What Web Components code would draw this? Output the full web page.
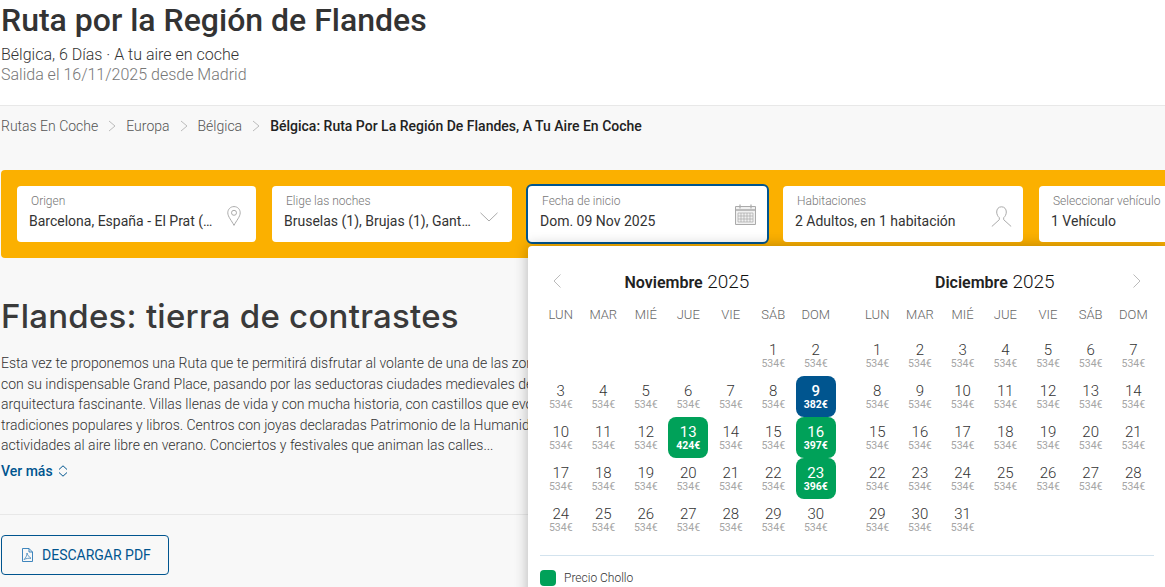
<!DOCTYPE html>
<html lang="es">
<head>
<meta charset="utf-8">
<title>Ruta por la Región de Flandes</title>
<style>
html, body { margin: 0; height: 587px; overflow: hidden; }
body { background: #f8f8f8; font-family: Roboto, "Liberation Sans", sans-serif; color: #333; }
</style>
</head>
<body>
<trip-page></trip-page>
<script>
const html = (strings, ...parts) => {
	const tpl = document.createElement('template')
	tpl.innerHTML = parts.reduce((s, value, i) => `${s}${strings[i]}${value}`, '') + strings[parts.length]
	return tpl
}

class Base extends HTMLElement {
	constructor(tpl) {
		super()
		this.attachShadow({mode: 'open'})
		this.shadowRoot.append(tpl.content.cloneNode(true))
	}
}

const headerTpl = html`<style>
:host { display: block; background: #fff; height: 106px; padding-left: 1px; box-sizing: border-box; border-bottom: 1px solid #e8e8e8; }
h1 { margin: 0; font: 500 32px/40px Roboto, sans-serif; color: #333; }
p { margin: 0; font: 300 16px/20px Roboto, sans-serif; }
.sub { margin-top: 5px; color: #333; }
.dep { color: #777; }
</style>
<h1>Ruta por la Región de Flandes</h1>
<p class="sub">Bélgica, 6 Días · A tu aire en coche</p>
<p class="dep">Salida el 16/11/2025 desde Madrid</p>`
customElements.define('trip-header', class extends Base {
	constructor() { super(headerTpl) }
})

const crumbsTpl = html`<style>
:host { display: flex; align-items: center; box-sizing: border-box; height: 41px; padding: 0 0 2px 1px; font: 300 14px Roboto, sans-serif; color: #555; white-space: nowrap; }
svg { width: 8px; height: 12px; margin: 0 10px 0 10px; fill: none; stroke: #bbb; }
b { font-weight: 500; color: #222; }
</style>
<span>Rutas En Coche</span>
<svg viewBox="0 0 8 12"><path d="M1 1l6 5-6 5"/></svg>
<span>Europa</span>
<svg viewBox="0 0 8 12"><path d="M1 1l6 5-6 5"/></svg>
<span>Bélgica</span>
<svg viewBox="0 0 8 12"><path d="M1 1l6 5-6 5"/></svg>
<b>Bélgica: Ruta Por La Región De Flandes, A Tu Aire En Coche</b>`
customElements.define('bread-crumbs', class extends Base {
	constructor() { super(crumbsTpl) }
})

const fieldTpl = html`<style>
:host { display: block; position: relative; flex: none; width: 240px; height: 56px; box-sizing: border-box; background: #fff; border-radius: 4px; padding: 7px 12px 0 12px; }
:host([active]) { height: 60px; width: 243px; margin: -2px -2px; border: 2px solid #00558f; border-radius: 6px; }
.label { font: 300 12px/16px Roboto, sans-serif; color: #777; padding-left: 2px; }
.value { margin-top: 2px; font: 400 14px/20px Roboto, sans-serif; color: #333; width: var(--value-width, 186px); white-space: nowrap; overflow: hidden; text-overflow: ellipsis; }
::slotted(svg) { position: absolute; right: 12px; top: 18px; }
</style>
<div class="label"></div>
<div class="value"></div>
<slot></slot>`
customElements.define('search-field', class extends Base {
	constructor() { super(fieldTpl) }
	connectedCallback() {
		this.shadowRoot.querySelector('.label').textContent = this.getAttribute('label')
		this.shadowRoot.querySelector('.value').textContent = this.getAttribute('value')
	}
})

const barTpl = html`<style>
:host { display: flex; gap: 16px; align-items: center; margin-left: 1px; margin-top: 23px; padding: 16px; height: 56px; width: 1300px; background: #fbb000; border-radius: 4px 0 0 4px; }
</style><slot></slot>`
customElements.define('search-bar', class extends Base {
	constructor() { super(barTpl) }
})

const introTpl = html`<style>
:host { display: block; padding-left: 1px; width: 700px; }
h2 { margin: 36px 0 0; font: 500 33px/44px Inter, sans-serif; color: #3a3a3a; white-space: nowrap; letter-spacing: .24px; }
p { margin: 15px 0 0; font: 300 14px/20.500px Roboto, sans-serif; color: #333; white-space: nowrap; }
.more { display: flex; align-items: center; gap: 5px; margin-top: 5px; font: 500 14px/21px Roboto, sans-serif; color: #00558f; }
hr { margin: 32px 0 0 -1px; width: 1165px; border: 0; border-top: 1px solid #e8e8e8; }
</style>
<h2>Flandes: tierra de contrastes</h2>
<p>Esta vez te proponemos una Ruta que te permitirá disfrutar al volante de una de las zon<br>
con su indispensable Grand Place, pasando por las seductoras ciudades medievales de<br>
arquitectura fascinante. Villas llenas de vida y con mucha historia, con castillos que evo<br>
tradiciones populares y libros. Centros con joyas declaradas Patrimonio de la Humanid<br>
actividades al aire libre en verano. Conciertos y festivales que animan las calles...</p>
<div class="more">Ver más
<svg width="10" height="12" viewBox="0 0 10 12" fill="none" stroke="#00558f"><path d="M1 4.500L5 .8l4 3.700M1 7.500l4 3.700 4-3.700"/></svg></div>
<hr>
<slot></slot>`
customElements.define('trip-intro', class extends Base {
	constructor() { super(introTpl) }
})

const pdfTpl = html`<style>
:host { display: inline-flex; align-items: center; gap: 9px; box-sizing: border-box; width: 168px; height: 40px; margin-top: 20px; padding-left: 20px; border: 1px solid #00558f; border-radius: 4px; font: 400 14px Roboto, sans-serif; color: #00558f; }
</style>
<svg width="11" height="14" viewBox="0 0 11 14" fill="none" stroke="#2a78b5" stroke-width=".9"><path d="M.5.5h6.500l3.500 3.500v9.500h-10zM7 .5v3.500h3.500"/><path d="M5 5c0 3-1.500 5-3 6.500 2-1 4.500-1.500 7-1.200C7 9 5.500 7 5 5z" stroke-width=".7"/></svg>
<span>DESCARGAR PDF</span>`
customElements.define('pdf-button', class extends Base {
	constructor() { super(pdfTpl) }
})

const monthTpl = html`<style>
:host { display: block; width: 298.900px; }
.title { height: 24px; box-sizing: border-box; padding-right: var(--title-shift, 0); text-align: center; font: 300 19px/24px Roboto, sans-serif; color: #111; }
.title b { font: 600 16px/24px Roboto, sans-serif; color: #222; }
.grid { display: grid; grid-template-columns: repeat(7, var(--col, 42.700px)); grid-auto-rows: 41px; }
.dow { margin-top: 10px; height: 21px; }
.dow span { text-align: center; font: 300 13px/21px Roboto, sans-serif; color: #666; }
.days { margin-top: 10px; }
.day { box-sizing: border-box; width: 40px; justify-self: center; text-align: center; padding-top: 6px; border-radius: 8px; font: 300 15px/18px Roboto, sans-serif; color: #333; }
.day small { display: block; font: 400 10.500px/10px Roboto, sans-serif; color: #a5a5a5; }
.day.low, .day.sel { color: #fff; font-weight: 400; }
.day.low small, .day.sel small { color: #fff; font-weight: 700; }
.day.low { background: #00a159; }
.day.sel { background: #00558f; font-weight: 500; }
</style>
<div class="title"><b></b> 2025</div>
<div class="grid dow"></div>
<div class="grid days"></div>`
customElements.define('cal-month', class extends Base {
	constructor() { super(monthTpl) }
	connectedCallback() {
		const root = this.shadowRoot
		root.querySelector('b').textContent = this.getAttribute('name')
		root.querySelector('.dow').innerHTML = ['LUN', 'MAR', 'MIÉ', 'JUE', 'VIE', 'SÁB', 'DOM'].map(d => `<span>${d}</span>`).join('')
		const offset = +this.getAttribute('offset')
		const count = +this.getAttribute('days')
		const low = JSON.parse(this.getAttribute('low') || '{}')
		const sel = this.getAttribute('sel')
		let cells = '<div></div>'.repeat(offset)
		for (let d = 1; d <= count; d++) {
			const cls = d == sel ? 'sel' : low[d] ? 'low' : ''
			cells += `<div class="day ${cls}">${d}<small>${low[d] || 534}€</small></div>`
		}
		root.querySelector('.days').innerHTML = cells
	}
})

const panelTpl = html`<style>
:host { display: block; position: absolute; left: 0; top: 60px; width: 640px; height: 360px; box-sizing: border-box; padding: 24px 12px 0 11.500px; background: #fff; border-radius: 4px; box-shadow: 0 0 14px rgba(0, 0, 0, .28); }
.months { display: flex; gap: 17.500px; }
.rule { margin-top: 15px; margin-left: .5px; width: 614px; border-top: 1px solid #d3e3ee; }
.legend { display: flex; align-items: center; gap: 8px; margin-top: 14px; margin-left: .5px; font: 300 12px/16px Roboto, sans-serif; color: #333; }
i { width: 16px; height: 16px; border-radius: 4px; background: #00a159; }
.nav { position: absolute; top: 28px; fill: none; stroke: #bbb; }
</style>
<svg class="nav" style="left:24px" width="10" height="14" viewBox="0 0 10 14"><path d="M8.500 .5L2 7l6.500 6.500"/></svg>
<svg class="nav" style="left:604px" width="10" height="14" viewBox="0 0 10 14"><path d="M1.500 .5L8 7l-6.500 6.500"/></svg>
<div class="months"><slot></slot></div>
<div class="rule"></div>
<div class="legend"><i></i><span>Precio Chollo</span></div>`
customElements.define('cal-panel', class extends Base {
	constructor() { super(panelTpl) }
})

const pageTpl = html`<style>
:host { display: block; width: 1165px; height: 587px; overflow: hidden; }
</style>
<trip-header></trip-header>
<bread-crumbs></bread-crumbs>
<search-bar>
	<search-field style="width:239px" label="Origen" value="Barcelona, España - El Prat (BCN)">
		<svg width="14" height="20" viewBox="0 0 14 20" fill="none" stroke="#aaa" stroke-width="1" style="right:15px;top:20px"><path d="M7 .6C3.400 .6 .8 3.300 .8 6.800.8 10.800 4.800 14.800 7 19.400c2.200-4.600 6.200-8.600 6.200-12.600C13.200 3.300 10.600 .6 7 .6z"/><circle cx="7" cy="6.800" r="2.500"/></svg>
	</search-field>
	<search-field style="--value-width:190px" label="Elige las noches" value="Bruselas (1), Brujas (1), Gante (1), Amberes (2)">
		<svg width="18" height="10" viewBox="0 0 18 10" fill="none" stroke="#aaa" stroke-width="1" style="top:26px;right:14px"><path d="M.5 .8L9 9 17.500 .8"/></svg>
	</search-field>
	<search-field active label="Fecha de inicio" value="Dom. 09 Nov 2025">
		<svg width="21" height="21" viewBox="0 0 21 21" fill="none" stroke="#aaa" style="right:11px;top:18px"><path d="M.5 2.500h20v18H.5z" fill="#f1f1f1"/><path d="M5 .5v4M16 .5v4" stroke-width="1.200"/><path d="M.5 6h20" stroke-width="1.500"/><path d="M3 9h15v9H3zM3 12h15M3 15h15M6 9v9M9 9v9M12 9v9M15 9v9" stroke-width=".7"/></svg>
		<cal-panel>
			<cal-month style="--title-shift:4px;--col:42.500px" name="Noviembre" offset="5" days="30" sel="9" low='{"9":382,"13":424,"16":397,"23":396}'></cal-month>
			<cal-month style="--title-shift:21px" name="Diciembre" offset="0" days="31"></cal-month>
		</cal-panel>
	</search-field>
	<search-field label="Habitaciones" value="2 Adultos, en 1 habitación">
		<svg width="21" height="21" viewBox="0 0 21 21" fill="none" stroke="#aaa" stroke-width="1" style="top:20px;right:11px"><path d="M10.500 .8c-3 0-4.800 2.200-4.800 5.200 0 2.500 1.200 4.500 2.600 5.700v2L.8 20.500M10.500 .8c3 0 4.800 2.200 4.800 5.200 0 2.500-1.200 4.500-2.600 5.700v2l7.500 6.800"/></svg>
	</search-field>
	<search-field label="Seleccionar vehículo" value="1 Vehículo"></search-field>
</search-bar>
<trip-intro><pdf-button></pdf-button></trip-intro>`
customElements.define('trip-page', class extends Base {
	constructor() { super(pageTpl) }
})
</script>
</body>
</html>
